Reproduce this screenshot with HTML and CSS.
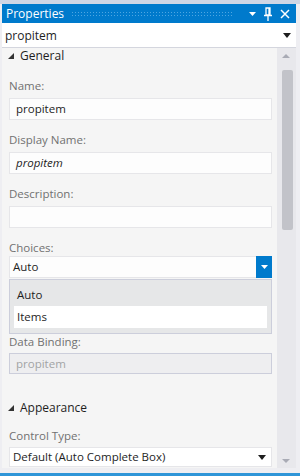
FILE: index.html
```html
<!DOCTYPE html>
<html lang="en">
<head>
    <meta charset="UTF-8">
    <title>Properties</title>
    <link rel="stylesheet" href="styles.css">
</head>
<body>
    <div class="frame-top"></div>

    <div class="window">
        <!-- Tool window title -->
        <div class="titlebar">
            <span class="title">Properties</span>
            <span class="grip"></span>
            <svg class="tb-icon" width="9" height="16" viewBox="0 0 9 16"><polygon points="1,6 8,6 4.5,10" fill="#fff"/></svg>
            <svg class="tb-icon" width="10" height="16" viewBox="0 0 10 16"><path d="M3 2h4v7H3z M1 9.5h8 M5 10v5 M6 2.5v6" stroke="#fff" stroke-width="1.3" fill="none"/></svg>
            <svg class="tb-icon" width="12" height="16" viewBox="0 0 12 16"><path d="M2 4l8 8M10 4l-8 8" stroke="#fff" stroke-width="1.5"/></svg>
        </div>

        <!-- Object picker -->
        <div class="picker">
            <span>propitem</span>
            <svg width="8" height="5" viewBox="0 0 8 5"><polygon points="0,0 8,0 4,5" fill="#1e1e1e"/></svg>
        </div>

        <div class="panel">
            <div class="content">
                <div class="section"><svg width="6" height="6" viewBox="0 0 6 6"><polygon points="6,0 6,6 0,6" fill="#333"/></svg>General</div>

                <div class="field field-first">
                    <div class="label">Name:</div>
                    <div class="input">propitem</div>
                </div>
                <div class="field">
                    <div class="label">Display Name:</div>
                    <div class="input italic">propitem</div>
                </div>
                <div class="field">
                    <div class="label">Description:</div>
                    <div class="input"></div>
                </div>
                <div class="field">
                    <div class="label label-tight">Choices:</div>
                    <div class="input select">
                        <span>Auto</span>
                        <span class="drop-btn"><svg width="7" height="4" viewBox="0 0 7 4"><polygon points="0,0 7,0 3.5,4" fill="#fff"/></svg></span>
                    </div>
                    <div class="droplist">
                        <div class="option option-hover">Auto</div>
                        <div class="option">Items</div>
                    </div>
                </div>
                <div class="field field-after-list">
                    <div class="label label-short">Data Binding:</div>
                    <div class="input disabled">propitem</div>
                </div>

                <div class="section section-gap"><svg width="6" height="6" viewBox="0 0 6 6"><polygon points="6,0 6,6 0,6" fill="#333"/></svg>Appearance</div>

                <div class="field">
                    <div class="label label-short">Control Type:</div>
                    <div class="input select select-plain">
                        <span>Default (Auto Complete Box)</span>
                        <svg width="8" height="5" viewBox="0 0 8 5"><polygon points="0,0 8,0 4,5" fill="#1e1e1e"/></svg>
                    </div>
                </div>
            </div>

            <!-- Vertical scrollbar -->
            <div class="scrollbar">
                <svg class="sb-arrow" width="19" height="18" viewBox="0 0 19 18"><polygon points="5,10 13,10 9,6" fill="#a9abb5"/></svg>
                <div class="thumb"></div>
                <div class="track"></div>
                <svg class="sb-arrow" width="19" height="18" viewBox="0 0 19 18"><polygon points="5,9 13,9 9,13" fill="#a9abb5"/></svg>
            </div>
        </div>
    </div>

    <div class="frame-band"></div>
    <div class="frame-bottom"></div>
</body>
</html>
```

FILE: styles.css
```css
/* Page */
body {
    margin: 0;
    width: 300px;
    height: 476px;
    overflow: hidden;
    display: flex;
    flex-direction: column;
    background: #eeeef2;
    font-family: "Open Sans", "Noto Sans", sans-serif;
    font-size: 11.5px;
    color: #1e1e1e;
}

.frame-top {
    height: 4px;
    background: #cfd6e5;
}

.window {
    display: flex;
    flex-direction: column;
    margin: 0 4px 0 2px;
}

/* Title bar */
.titlebar {
    height: 19px;
    background: #007acc;
    color: #fff;
    display: flex;
    align-items: center;
    padding: 0 5px 0 4px;
}

.title {
    font-size: 12px;
    line-height: 19px;
}

.grip {
    flex: 1;
    height: 6px;
    margin: 1px 9px 0 7px;
    background-image: radial-gradient(circle, #4ea6e2 0.7px, transparent 0.9px);
    background-size: 3px 3px;
}

.tb-icon {
    display: block;
    margin-left: 6px;
}

/* Object picker */
.picker {
    height: 24px;
    background: #fff;
    border-bottom: 1px solid #d4d6de;
    display: flex;
    align-items: center;
    justify-content: space-between;
    padding: 0 5px 0 3px;
    font-size: 12px;
}

/* Property grid */
.panel {
    height: 420px;
    display: flex;
    background: #f5f5f5;
}

.content {
    flex: 1;
    padding: 0 5px 0 7px;
    overflow: hidden;
}

.section {
    height: 16px;
    line-height: 16px;
    display: flex;
    align-items: center;
    font-size: 12px;
}

.section svg {
    margin: 0 6px 0 -1px;
}

.section-gap {
    margin-top: 26px;
}

.field {
    margin-top: 12px;
}

.field-first {
    margin-top: 14px;
}

.field-after-list {
    margin-top: 0;
}

.label {
    height: 16px;
    line-height: 16px;
    margin-bottom: 4px;
    color: #717171;
}

.label-tight {
    margin-bottom: 0;
}

.label-short {
    margin-bottom: 3px;
}

.input {
    height: 22px;
    box-sizing: border-box;
    border: 1px solid #e6e6e9;
    background: #fdfdfd;
    padding: 0 6px;
    line-height: 20px;
}

.italic {
    font-style: italic;
}

.disabled {
    background: #eeeef0;
    border-color: #cccedb;
    color: #a2a4a5;
    height: 21px;
    line-height: 19px;
}

.select {
    display: flex;
    align-items: center;
    justify-content: space-between;
    padding: 0 0 0 3px;
    border-color: #e6e6e9;
}

.drop-btn {
    width: 16px;
    height: 22px;
    margin: -1px -1px -1px 0;
    background: #007acc;
    display: flex;
    align-items: center;
    justify-content: center;
}

.select-plain {
    height: 20px;
    padding-right: 5px;
    background: #fff;
}

.droplist {
    margin-top: 1px;
    border: 1px solid #cccedb;
    background: #e6e7e8;
    padding: 3px 4px 5px;
}

.option {
    height: 22px;
    line-height: 22px;
    padding-left: 3px;
}

.option-hover {
    height: 23px;
    line-height: 23px;
}

.option + .option {
    background: #fff;
}

/* Scrollbar */
.scrollbar {
    width: 19px;
    background: #e8e8ec;
    display: flex;
    flex-direction: column;
}

.sb-arrow {
    display: block;
}

.thumb {
    height: 160px;
    margin: 4px 3px 0 5px;
    border-radius: 2px;
    background: #c2c3c9;
}

.track {
    flex: 1;
}

.frame-band {
    height: 5px;
    background: #eeeef2;
}

.frame-bottom {
    height: 3px;
    background: #2e95d8;
}
```
